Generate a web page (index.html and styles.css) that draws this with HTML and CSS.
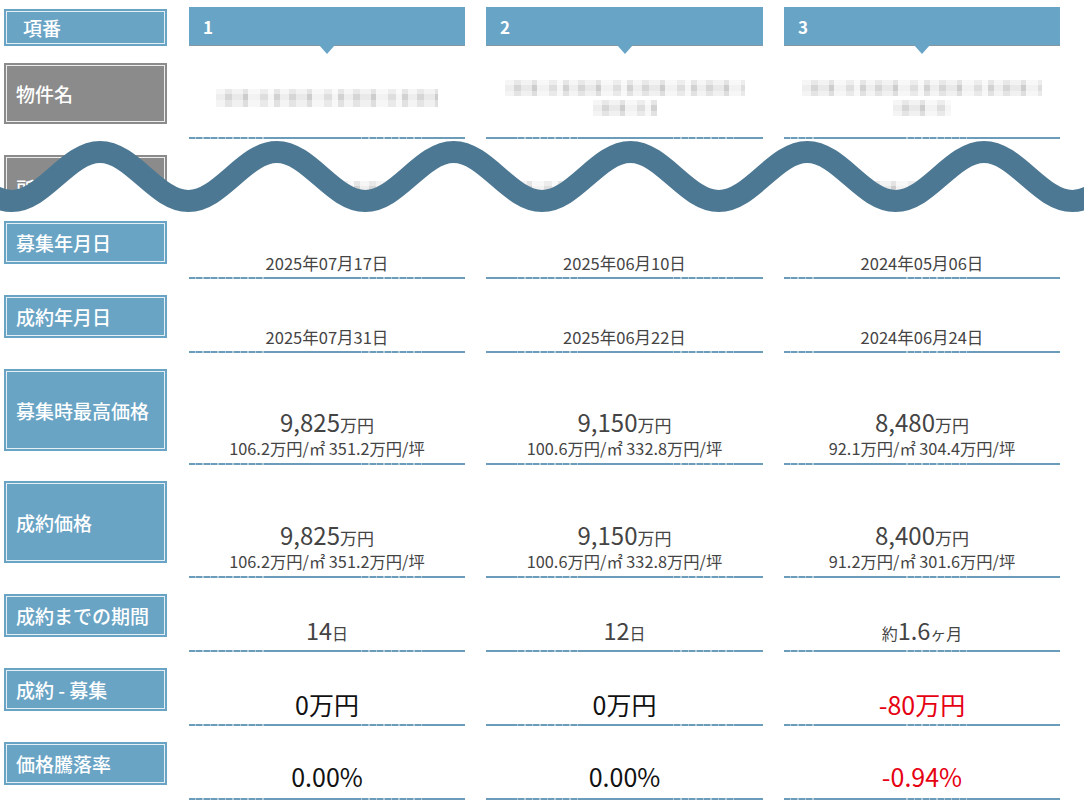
FILE: index.html
```html
<!DOCTYPE html>
<html lang="ja">
<head>
<meta charset="utf-8">
<title>成約事例比較</title>
<link rel="stylesheet" href="styles.css">
</head>
<body>
<div class="page">
  <div class="sheet">
    <div class="row r-head">
      <div class="lab lab-num">項番</div>
      <div class="head">1</div>
      <div class="head">2</div>
      <div class="head">3</div>
    </div>

    <div class="row r-name">
      <div class="lab lab-grey">物件名</div>
      <div class="cell cell-name c1"><div class="blur b-n1"></div></div>
      <div class="cell cell-name c2"><div class="blur b-n2a"></div><div class="blur b-n2b"></div></div>
      <div class="cell cell-name c3"><div class="blur b-n2a"></div><div class="blur b-n3b"></div></div>
    </div>

    <div class="row r-loc">
      <div class="lab lab-grey">所在地</div>
      <div class="cell-loc"><div class="blur b-l1"></div></div>
      <div class="cell-loc"><div class="blur b-l2"></div></div>
      <div class="cell-loc"><div class="blur b-l3"></div></div>
    </div>

    <div class="row r-s r-date">
      <div class="lab">募集年月日</div>
      <div class="cell c1"><div class="date">2025年07月17日</div></div>
      <div class="cell c2"><div class="date">2025年06月10日</div></div>
      <div class="cell c3"><div class="date">2024年05月06日</div></div>
    </div>

    <div class="row r-s r-date">
      <div class="lab">成約年月日</div>
      <div class="cell c1"><div class="date">2025年07月31日</div></div>
      <div class="cell c2"><div class="date">2025年06月22日</div></div>
      <div class="cell c3"><div class="date">2024年06月24日</div></div>
    </div>

    <div class="row r-l1 r-price">
      <div class="lab">募集時最高価格</div>
      <div class="cell c1"><div class="pmain">9,825<span class="u">万円</span></div><div class="psub">106.2万円/㎡ 351.2万円/坪</div></div>
      <div class="cell c2"><div class="pmain">9,150<span class="u">万円</span></div><div class="psub">100.6万円/㎡ 332.8万円/坪</div></div>
      <div class="cell c3"><div class="pmain">8,480<span class="u">万円</span></div><div class="psub">92.1万円/㎡ 304.4万円/坪</div></div>
    </div>

    <div class="row r-l2 r-price">
      <div class="lab">成約価格</div>
      <div class="cell c1"><div class="pmain">9,825<span class="u">万円</span></div><div class="psub">106.2万円/㎡ 351.2万円/坪</div></div>
      <div class="cell c2"><div class="pmain">9,150<span class="u">万円</span></div><div class="psub">100.6万円/㎡ 332.8万円/坪</div></div>
      <div class="cell c3"><div class="pmain">8,400<span class="u">万円</span></div><div class="psub">91.2万円/㎡ 301.6万円/坪</div></div>
    </div>

    <div class="row r-s r-term">
      <div class="lab">成約までの期間</div>
      <div class="cell c1"><div class="term">14<span class="u">日</span></div></div>
      <div class="cell c2"><div class="term">12<span class="u">日</span></div></div>
      <div class="cell c3"><div class="term"><span class="u">約</span>1.6<span class="u">ヶ月</span></div></div>
    </div>

    <div class="row r-s r-diff">
      <div class="lab">成約 - 募集</div>
      <div class="cell c1"><div class="big">0万円</div></div>
      <div class="cell c2"><div class="big">0万円</div></div>
      <div class="cell c3"><div class="big neg">-80万円</div></div>
    </div>

    <div class="row r-s r-rate">
      <div class="lab">価格騰落率</div>
      <div class="cell c1"><div class="big">0.00%</div></div>
      <div class="cell c2"><div class="big">0.00%</div></div>
      <div class="cell c3"><div class="big neg">-0.94%</div></div>
    </div>
  </div>

  <svg class="wave" width="1084" height="110" viewBox="0 120 1084 110" aria-hidden="true">
    <path class="wave-fill" d="M -76.8 152 C -44.6 152 -20.6 201 11.6 201 S 67.8 152 100 152 S 156.2 201 188.4 201 S 244.6 152 276.8 152 S 333 201 365.2 201 S 421.4 152 453.6 152 S 509.8 201 542 201 S 598.2 152 630.4 152 S 686.6 201 718.8 201 S 775 152 807.2 152 S 863.4 201 895.6 201 S 951.8 152 984 152 S 1040.2 201 1072.4 201 S 1128.6 152 1160.8 152 L 1160.8 219 L -76.8 219 Z"/>
    <path class="wave-line" d="M -76.8 152 C -44.6 152 -20.6 201 11.6 201 S 67.8 152 100 152 S 156.2 201 188.4 201 S 244.6 152 276.8 152 S 333 201 365.2 201 S 421.4 152 453.6 152 S 509.8 201 542 201 S 598.2 152 630.4 152 S 686.6 201 718.8 201 S 775 152 807.2 152 S 863.4 201 895.6 201 S 951.8 152 984 152 S 1040.2 201 1072.4 201 S 1128.6 152 1160.8 152"/>
  </svg>
</div>
</body>
</html>
```

FILE: styles.css
```css
* { box-sizing: border-box; }

body {
  margin: 0;
  background: #fff;
  font-family: "Noto Sans CJK JP", "Noto Sans", sans-serif;
}

.page {
  position: relative;
  width: 1084px;
  height: 809px;
  overflow: hidden;
}

.sheet {
  padding-top: 7px;
}

.row {
  display: grid;
  grid-template-columns: 164px 276px 277px 276px;
  column-gap: 21px;
  padding-left: 4px;
  align-items: start;
}

.r-head { height: 40px; }
.r-name { height: 92px; align-items: stretch; }
.r-loc { height: 66px; overflow: hidden; }
.r-s { height: 74px; align-items: stretch; }
.r-l1 { height: 112px; align-items: stretch; }
.r-l2 { height: 113px; align-items: stretch; }

/* label boxes */
.lab {
  align-self: start;
  margin: 18px 3px 0 2px;
  height: 39px;
  display: flex;
  align-items: center;
  padding-left: 9px;
  background: #69a4c5;
  border: 1px solid #e3eef5;
  box-shadow: 0 0 0 2px #69a4c5;
  color: #fff;
  font-size: 19px;
  font-weight: 500;
  line-height: 1;
  white-space: nowrap;
}

.lab-grey {
  background: #8b8b8b;
  box-shadow: 0 0 0 2px #8b8b8b;
  border-color: #ececec;
}

.lab-num {
  margin-top: 4px;
  height: 33px;
  padding-left: 16px;
}

.r-name .lab { height: 57px; }
.r-loc .lab { height: 60px; }
.r-l1 .lab, .r-l2 .lab { height: 78px; }

/* column headers */
.head {
  position: relative;
  height: 39px;
  background: #68a4c5;
  border-bottom: 1px solid #8697a2;
  display: flex;
  align-items: center;
  padding-left: 14px;
  color: #fff;
  font-size: 17px;
  font-weight: 700;
  line-height: 1;
}

.head::after {
  content: "";
  position: absolute;
  left: 50%;
  bottom: -9px;
  margin-left: -8px;
  border-left: 8px solid transparent;
  border-right: 8px solid transparent;
  border-top: 9px solid #68a4c5;
}

/* data cells */
.cell {
  display: flex;
  flex-direction: column;
  align-items: center;
  justify-content: flex-end;
  color: #444;
  background:
    linear-gradient(#6b9dbb, #6b9dbb) 0 100% / 100% 2px no-repeat;
}

.c1 {
  background:
    repeating-linear-gradient(90deg, rgba(255,255,255,0) 0 6px, rgba(255,255,255,.45) 6px 7.5px) 0 100% / 81px 2px no-repeat,
    repeating-linear-gradient(90deg, rgba(255,255,255,0) 0 6px, rgba(255,255,255,.45) 6px 7.5px) 166px 100% / 72px 2px no-repeat,
    linear-gradient(#6b9dbb, #6b9dbb) 0 100% / 100% 2px no-repeat;
}

.c2 {
  background:
    repeating-linear-gradient(90deg, rgba(255,255,255,0) 0 6px, rgba(255,255,255,.45) 6px 7.5px) 25px 100% / 71px 2px no-repeat,
    repeating-linear-gradient(90deg, rgba(255,255,255,0) 0 6px, rgba(255,255,255,.45) 6px 7.5px) 181px 100% / 71px 2px no-repeat,
    linear-gradient(#6b9dbb, #6b9dbb) 0 100% / 100% 2px no-repeat;
}

.c3 {
  background:
    repeating-linear-gradient(90deg, rgba(255,255,255,0) 0 6px, rgba(255,255,255,.45) 6px 7.5px) 0 100% / 31px 2px no-repeat,
    repeating-linear-gradient(90deg, rgba(255,255,255,0) 0 6px, rgba(255,255,255,.45) 6px 7.5px) 116px 100% / 71px 2px no-repeat,
    linear-gradient(#6b9dbb, #6b9dbb) 0 100% / 100% 2px no-repeat;
}

.cell-name {
  justify-content: center;
  padding-top: 12px;
  padding-bottom: 2px;
  gap: 4px;
}

/* pixelated (blurred) names */
.blur {
  height: 16px;
  background:
    linear-gradient(180deg, rgba(255,255,255,.45) 0 5px, rgba(255,255,255,0) 5px 11px, rgba(255,255,255,.35) 11px),
    repeating-linear-gradient(90deg, #eeeeee 0 9px, #d6d6d6 9px 16px, #e9e9e9 16px 27px, #cdcdcd 27px 32px, #f2f2f2 32px 44px, #dedede 44px 52px, #f5f5f5 52px 58px, #d2d2d2 58px 64px);
}

.b-n1 { width: 222px; height: 18px; }
.b-n2a { width: 240px; }
.b-n2b { width: 64px; }
.b-n3b { width: 58px; }

.cell-loc {
  padding-top: 42px;
  display: flex;
}

.b-l1 { width: 208px; margin-left: 43px; height: 13px; }
.b-l2 { width: 180px; margin-left: 14px; height: 13px; }
.b-l3 { width: 240px; margin-left: 16px; height: 13px; }

/* text */
.date {
  font-size: 16.5px;
  line-height: 20px;
}
.r-date .cell { padding-bottom: 6px; }

.pmain {
  font-size: 24px;
  line-height: 24px;
  margin-bottom: 4px;
}
.pmain .u {
  font-size: 17px;
  line-height: 1;
}
.psub {
  font-size: 16.3px;
  line-height: 20px;
  white-space: nowrap;
}
.r-price .cell { padding-bottom: 7px; }

.term {
  font-size: 23.5px;
  line-height: 23px;
}
.term .u {
  font-size: 16px;
  line-height: 1;
}
.r-term .cell { padding-bottom: 10px; }

.big {
  font-size: 25px;
  line-height: 25px;
  color: #111;
}
.big.neg { color: #e60012; }
.r-diff .cell { padding-bottom: 9px; }
.r-rate .cell { padding-bottom: 11px; }

/* wave overlay marking the omitted part */
.wave {
  position: absolute;
  left: 0;
  top: 120px;
  pointer-events: none;
}
.wave-fill { fill: #fff; }
.wave-line {
  fill: none;
  stroke: #4d7893;
  stroke-width: 22;
}
```
